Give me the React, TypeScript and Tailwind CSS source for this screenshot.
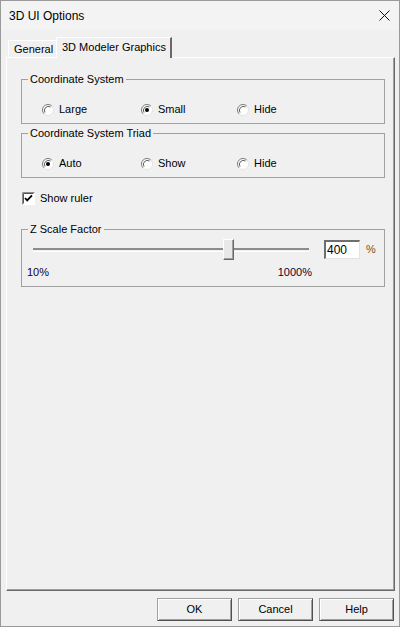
import React from "react";

const ui = "font-['Liberation_Sans',Arial,sans-serif] text-[11px] leading-[13px] text-black";

function Radio({ checked }: { checked?: boolean }) {
  return (
    <svg width="12" height="12" viewBox="0 0 12 12" className="shrink-0">
      <circle cx="6" cy="6" r="5.5" fill="#ffffff" />
      <path d="M2.1 9.9 A5.5 5.5 0 0 1 9.9 2.1" stroke="#7a7a7a" fill="none" />
      <path d="M9.9 2.1 A5.5 5.5 0 0 1 2.1 9.9" stroke="#e3e3e3" fill="none" />
      <path d="M3 8.5 A4 4 0 0 1 8.5 3" stroke="#4a4a4a" fill="none" strokeWidth="0.9" />
      {checked ? <circle cx="6" cy="6" r="2" fill="#000" /> : null}
    </svg>
  );
}

function RadioItem({ label, checked, width }: { label: string; checked?: boolean; width: string }) {
  return (
    <div className={`flex items-center gap-[5px] ${width}`}>
      <Radio checked={checked} />
      <span>{label}</span>
    </div>
  );
}

function Group({ title, children, className = "" }: { title: string; children: React.ReactNode; className?: string }) {
  return (
    <fieldset className={`w-[364px] border border-[#a0a0a0] ${className}`}>
      <legend className="ml-[6px] px-[2px] leading-[13px]">{title}</legend>
      {children}
    </fieldset>
  );
}

export default function App() {
  return (
    <div className={`w-[400px] h-[627px] border border-[#9a9a9a] bg-[#f0f0f0] flex flex-col ${ui}`}>
      {/* title bar */}
      <div className="h-[29px] shrink-0 bg-[#f3f3f3] flex items-center justify-between pl-[8px] pr-[9px]">
        <span className="text-[12px] pt-[1px]">3D UI Options</span>
        <svg width="11" height="11" viewBox="0 0 11 11" className="mt-[-1px]">
          <path d="M0.5 0.5 L10.5 10.5 M10.5 0.5 L0.5 10.5" stroke="#111" strokeWidth="1" />
        </svg>
      </div>

      {/* tabs */}
      <div className="mt-[7px] ml-[7px] flex items-end h-[20px]">
        <div className="h-[17px] w-[48px] border-t border-l border-white shadow-[1px_0_0_#a0a0a0] flex items-center pl-[5px] pt-[1px]">
          General
        </div>
        <div className="relative z-10 -mb-[1px] h-[21px] w-[116px] bg-[#f0f0f0] border-t border-l border-white border-r-2 border-r-[#696969] flex items-start pl-[5px] pt-[3px]">
          3D Modeler Graphics
        </div>
      </div>

      {/* tab panel */}
      <div className="ml-[5px] w-[389px] h-[534px] shrink-0 border-t border-l border-white border-r border-b border-r-[#696969] border-b-[#696969] shadow-[inset_-1px_-1px_0_#a0a0a0] pl-[14px] pt-[15px]">
        <Group title="Coordinate System">
          <div className="mt-[17px] mb-[7px] pl-[20px] flex items-center h-[13px]">
            <RadioItem label="Large" width="w-[99px]" />
            <RadioItem label="Small" checked width="w-[96px]" />
            <RadioItem label="Hide" width="w-[80px]" />
          </div>
        </Group>

        <Group title="Coordinate System Triad" className="mt-[3px]">
          <div className="mt-[17px] mb-[7px] pl-[20px] flex items-center h-[13px]">
            <RadioItem label="Auto" checked width="w-[99px]" />
            <RadioItem label="Show" width="w-[96px]" />
            <RadioItem label="Hide" width="w-[80px]" />
          </div>
        </Group>

        <div className="mt-[14px] h-[13px] flex items-center gap-[5px] pl-[1px]">
          <svg width="13" height="13" viewBox="0 0 13 13" className="shrink-0">
            <rect x="0" y="0" width="13" height="13" fill="#ffffff" />
            <path d="M0.5 12.5 V0.5 H12.5" stroke="#8c8c8c" fill="none" />
            <path d="M1.5 11.5 V1.5 H11.5" stroke="#555" fill="none" />
            <path d="M3 6 L5.2 8.4 L10 3.4" stroke="#000" strokeWidth="1.8" fill="none" />
          </svg>
          <span>Show ruler</span>
        </div>

        <Group title="Z Scale Factor" className="mt-[18px]">
          <div className="mt-[1px] h-[25px] flex items-center">
            <div className="relative ml-[11px] w-[276px] h-[25px] flex items-center">
              <div className="w-full h-[4px] border-t-2 border-t-[#8c8c8c] border-b border-b-white" />
              <div className="absolute left-[190px] top-[2px] w-[11px] h-[21px] bg-[#e8e8e8] border-t border-l border-white border-r border-b border-r-[#696969] border-b-[#696969] shadow-[inset_-1px_-1px_0_#a0a0a0]" />
            </div>
            <div className="ml-[15px] w-[36px] h-[19px] bg-white border-t-2 border-l-2 border-t-[#6e6e6e] border-l-[#6e6e6e] border-r border-b border-r-[#e3e3e3] border-b-[#e3e3e3] flex items-center pl-[1px] text-[12px]">
              400
            </div>
            <span className="ml-[6px] text-[#8a4a10]">%</span>
          </div>
          <div className="mt-[4px] mb-[7px] h-[13px] flex justify-between pl-[5px] pr-[72px] text-[#14002a]">
            <span>10%</span>
            <span>1000%</span>
          </div>
        </Group>
      </div>

      {/* buttons */}
      <div className="mt-[7px] flex justify-end gap-[6px] pr-[5px]">
        {["OK", "Cancel", "Help"].map((b) => (
          <div
            key={b}
            className="w-[75px] h-[23px] flex items-center justify-center border border-t-[#a0a0a0] border-l-[#a0a0a0] border-r-[#505050] border-b-[#505050] shadow-[inset_1px_1px_0_#fff,inset_-1px_-1px_0_#a0a0a0] bg-[#f0f0f0]"
          >
            {b}
          </div>
        ))}
      </div>
    </div>
  );
}
